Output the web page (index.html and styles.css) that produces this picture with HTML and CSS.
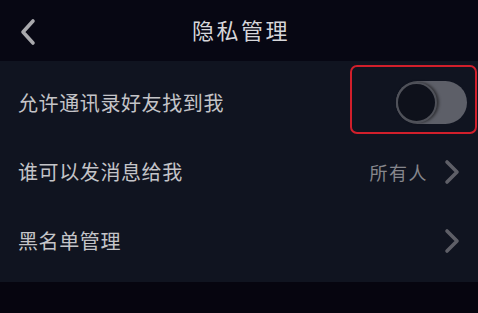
FILE: index.html
```html
<!DOCTYPE html>
<html lang="zh">
<head>
<meta charset="utf-8">
<link rel="stylesheet" href="styles.css">
</head>
<body>
<div class="screen">
  <header class="topbar">
    <svg class="back" width="16" height="28" viewBox="0 0 16 28"><path d="M13 3 L3 14 L13 25" fill="none" stroke="#a9a9ad" stroke-width="3.6" stroke-linecap="round" stroke-linejoin="round"/></svg>
    <h1 class="title">隐私管理</h1>
  </header>
  <section class="panel">
    <div class="row">
      <span class="label">允许通讯录好友找到我</span>
      <div class="toggle"><span class="knob"></span></div>
      <div class="highlight"></div>
    </div>
    <div class="row">
      <span class="label">谁可以发消息给我</span>
      <span class="value">所有人</span>
      <svg class="chev" width="16" height="26" viewBox="0 0 16 26"><path d="M3 3 L13 13 L3 23" fill="none" stroke="#5e5f67" stroke-width="3.6" stroke-linecap="round" stroke-linejoin="round"/></svg>
    </div>
    <div class="row">
      <span class="label">黑名单管理</span>
      <svg class="chev" width="16" height="26" viewBox="0 0 16 26"><path d="M3 3 L13 13 L3 23" fill="none" stroke="#5e5f67" stroke-width="3.6" stroke-linecap="round" stroke-linejoin="round"/></svg>
    </div>
  </section>
</div>
</body>
</html>
```

FILE: styles.css
```css
* { box-sizing: border-box; }
html, body {
  margin: 0;
  padding: 0;
  background: #06050f;
  font-family: "Noto Sans CJK SC", "Noto Sans", sans-serif;
}
.screen {
  width: 478px;
  height: 313px;
  background: #06050f;
}
.topbar {
  height: 61px;
  background: #070713;
  display: flex;
  align-items: center;
  position: relative;
  padding-left: 20px;
}
.back { display: block; margin-top: 2px; }
.title {
  position: absolute;
  left: 0;
  right: 0;
  top: 0;
  margin: 0;
  text-align: center;
  line-height: 58px;
  font-size: 22px;
  font-weight: 400;
  letter-spacing: 2.5px;
  color: #d6d6da;
  padding-left: 4px;
  pointer-events: none;
}
.panel {
  height: 221px;
  background: #101420;
  padding-top: 7px;
}
.row {
  height: 69px;
  display: flex;
  align-items: center;
  padding: 0 18px 0 18px;
  position: relative;
}
.label {
  flex: 1;
  font-size: 20px;
  letter-spacing: 0.6px;
  color: #c4c4c8;
}
.value {
  font-size: 18px;
  letter-spacing: 1.5px;
  color: #86868c;
  margin-right: 16px;
}
.chev { display: block; }
.toggle {
  width: 71px;
  height: 43px;
  border-radius: 22px;
  background: #5d5f68;
  margin-right: -7px;
  position: relative;
}
.knob {
  position: absolute;
  left: 0;
  top: 1px;
  width: 41px;
  height: 41px;
  border-radius: 50%;
  background: #0e111b;
  border: 2px solid #4f5159;
  box-shadow: 2px 0 3px rgba(0,0,0,0.5);
}
.highlight {
  position: absolute;
  left: 350px;
  right: 1px;
  top: -3px;
  height: 69px;
  border: 2.5px solid #d11f2b;
  border-radius: 7px;
}
```
